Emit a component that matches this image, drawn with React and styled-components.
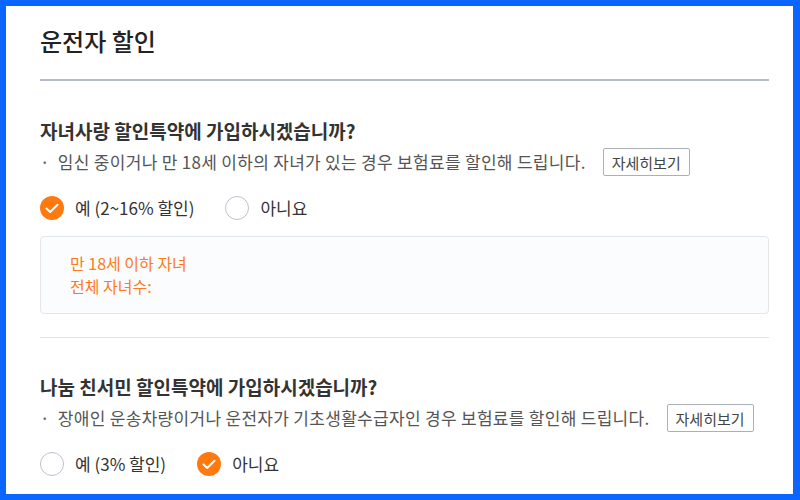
import React from "react";
import styled, { createGlobalStyle } from "styled-components";

const GlobalStyle = createGlobalStyle`
	* { box-sizing: border-box; }
	body {
		margin: 0;
		font-family: "Noto Sans CJK KR", "Noto Sans", sans-serif;
		background: #ffffff;
	}
`;

const Frame = styled.div`
	width: 800px;
	height: 500px;
	border: 6px solid #0a66ff;
	border-right-width: 7px;
	padding: 19px 24px 0 34px;
	overflow: hidden;
	background: #fff;
`;

const Title = styled.h1`
	margin: 0;
	font-size: 24px;
	font-weight: 500;
	color: #222;
	line-height: 32px;
	padding-bottom: 22px;
	border-bottom: 2px solid #b4bdc8;
`;

const Section = styled.section`
	padding-top: ${(p) => p.$top}px;
	padding-bottom: ${(p) => p.$bottom || 0}px;
	border-bottom: ${(p) => (p.$divider ? "1px solid #dde3ec" : "none")};
`;

const Question = styled.h2`
	margin: 0;
	font-size: 19px;
	font-weight: 700;
	color: #333;
	line-height: 26px;
`;

const DescRow = styled.div`
	display: flex;
	align-items: center;
	margin-top: 4px;
`;

const Desc = styled.p`
	margin: 0;
	font-size: 17px;
	letter-spacing: 0.3px;
	color: #555;
	line-height: 24px;
	&::before {
		content: "·";
		margin-right: 8px;
	}
`;

const MoreButton = styled.button`
	margin-left: 17px;
	height: 28px;
	padding: 0 8px;
	font-family: inherit;
	font-size: 15px;
	color: #444;
	background: #fff;
	border: 1px solid #a9b0b8;
	border-radius: 2px;
`;

const Options = styled.div`
	display: flex;
	align-items: center;
	gap: 31px;
	margin-top: 20px;
`;

const Option = styled.label`
	display: flex;
	align-items: center;
	gap: 11px;
	font-size: 17px;
	line-height: 24px;
	color: #333;
`;

const Circle = styled.span`
	width: 24px;
	height: 24px;
	border-radius: 50%;
	display: flex;
	align-items: center;
	justify-content: center;
	background: ${(p) => (p.$on ? "#ff7a0e" : "#fff")};
	border: ${(p) => (p.$on ? "none" : "1.5px solid #bcc3cb")};
`;

const InfoBox = styled.div`
	margin-top: 16px;
	padding: 15px 29px;
	background: #fbfcfd;
	border: 1px solid #e3e7ec;
	border-radius: 4px;
	color: #ff7a1a;
	font-size: 16px;
	line-height: 23px;
`;

const Radio = ({ on, children }) => (
	<Option>
		<Circle $on={on}>
			{on && (
				<svg width="14" height="11" viewBox="0 0 14 11">
					<path d="M1.5 5.5 L5.2 9 L12.5 1.8" fill="none" stroke="#fff" strokeWidth="2" strokeLinecap="round" strokeLinejoin="round" />
				</svg>
			)}
		</Circle>
		{children}
	</Option>
);

const App = () => {
	return (
		<>
			<GlobalStyle />
			<Frame>
				<Title>운전자 할인</Title>
				<Section $top={37} $bottom={23} $divider>
					<Question>자녀사랑 할인특약에 가입하시겠습니까?</Question>
					<DescRow>
						<Desc>임신 중이거나 만 18세 이하의 자녀가 있는 경우 보험료를 할인해 드립니다.</Desc>
						<MoreButton>자세히보기</MoreButton>
					</DescRow>
					<Options>
						<Radio on>예 (2~16% 할인)</Radio>
						<Radio>아니요</Radio>
					</Options>
					<InfoBox>
						<div>만 18세 이하 자녀</div>
						<div>전체 자녀수:</div>
					</InfoBox>
				</Section>
				<Section $top={36}>
					<Question>나눔 친서민 할인특약에 가입하시겠습니까?</Question>
					<DescRow>
						<Desc>장애인 운송차량이거나 운전자가 기초생활수급자인 경우 보험료를 할인해 드립니다.</Desc>
						<MoreButton>자세히보기</MoreButton>
					</DescRow>
					<Options>
						<Radio>예 (3% 할인)</Radio>
						<Radio on>아니요</Radio>
					</Options>
				</Section>
			</Frame>
		</>
	);
};

export default App;
